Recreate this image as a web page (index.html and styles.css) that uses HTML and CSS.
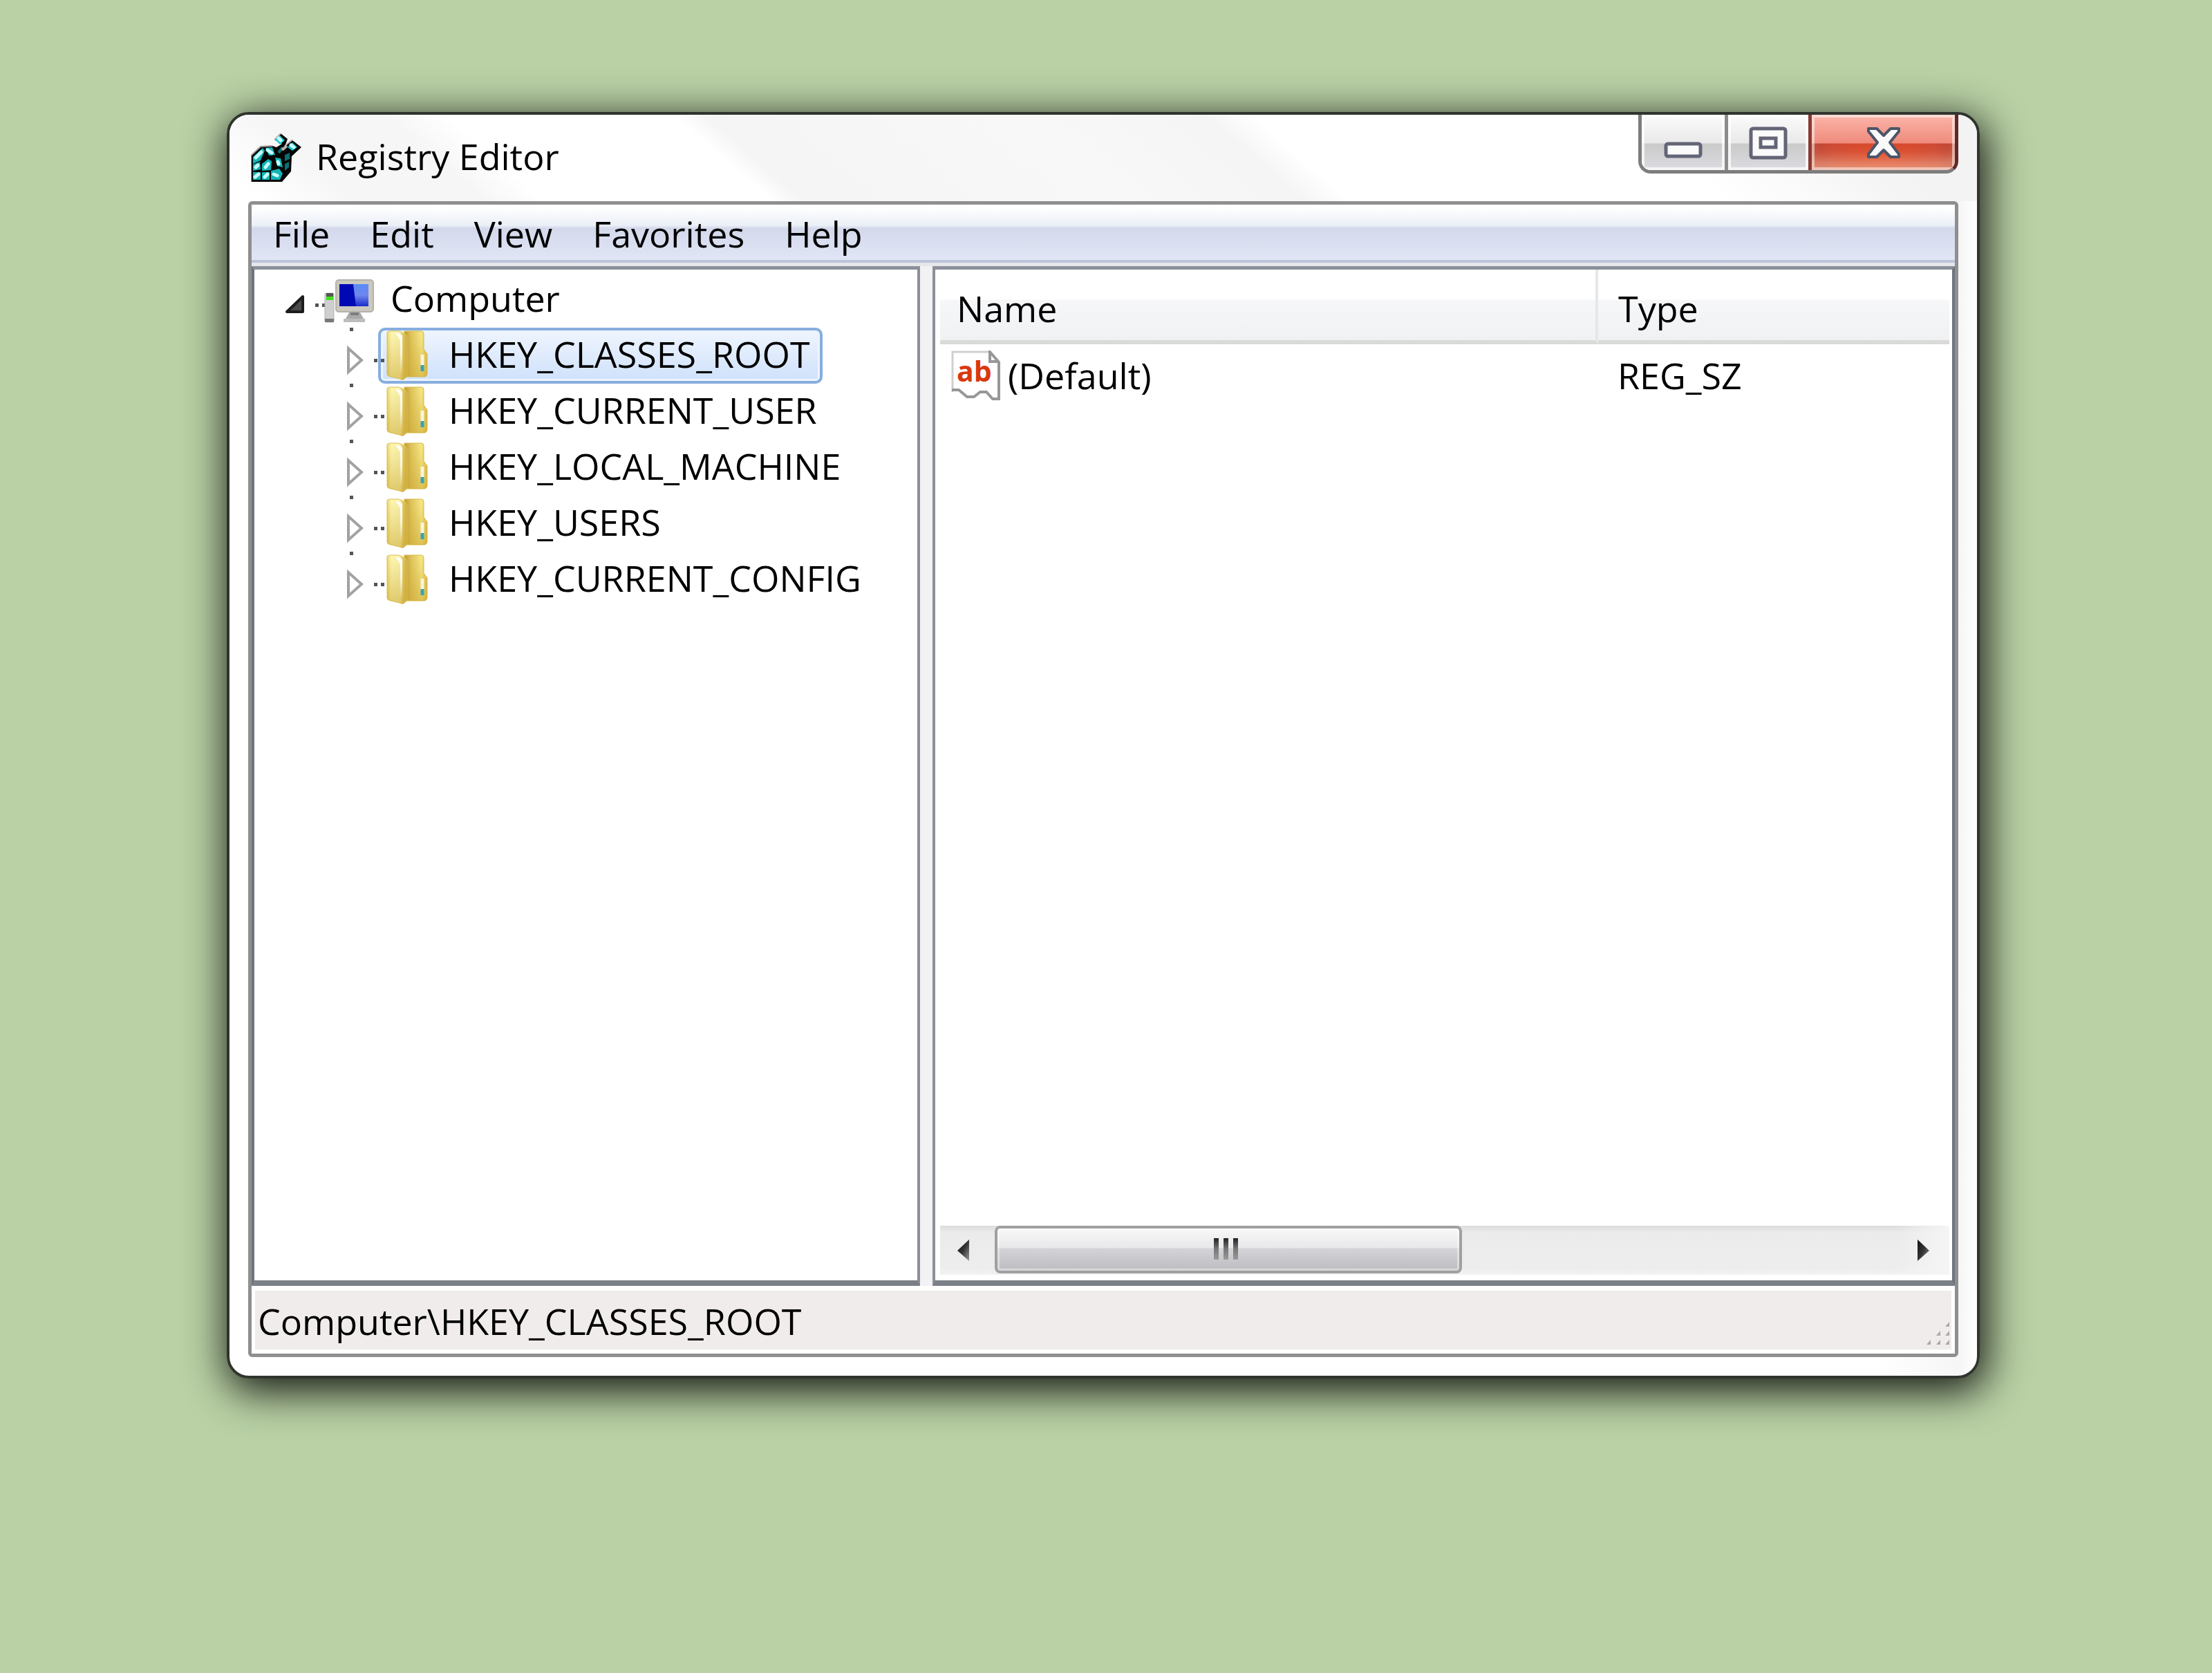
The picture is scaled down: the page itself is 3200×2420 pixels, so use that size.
FILE: index.html
```html
<!DOCTYPE html>
<html lang="en">
<head>
<meta charset="utf-8">
<title>Registry Editor</title>
<link rel="stylesheet" href="styles.css">
</head>
<body>
<svg width="0" height="0" class="defs" aria-hidden="true">
  <defs>
    <linearGradient id="flap" x1="0" x2="1" y1="0" y2="0">
      <stop offset="0" stop-color="#ecd66c"/><stop offset=".2" stop-color="#fdf7b4"/><stop offset=".65" stop-color="#f9f2b0"/><stop offset=".8" stop-color="#e3c95c"/><stop offset="1" stop-color="#cdb04a"/>
    </linearGradient>
    <linearGradient id="shade" x1="0" x2="0" y1="0" y2="1">
      <stop offset="0" stop-color="#c9a530" stop-opacity="0"/><stop offset="1" stop-color="#c9a530" stop-opacity=".55"/>
    </linearGradient>
    <linearGradient id="back" x1="0" x2="1" y1="0" y2="0">
      <stop offset="0" stop-color="#b99a3a"/><stop offset=".3" stop-color="#e0c45a"/><stop offset=".75" stop-color="#f7e98a"/><stop offset="1" stop-color="#e4c64f"/>
    </linearGradient>
    <linearGradient id="glint" x1="0" x2="0" y1="0" y2="1">
      <stop offset="0" stop-color="#fff"/><stop offset=".5" stop-color="#fff" stop-opacity=".8"/><stop offset="1" stop-color="#fff" stop-opacity="0"/>
    </linearGradient>
    <linearGradient id="screen" x1="0" x2="0" y1="0" y2="1">
      <stop offset="0" stop-color="#5b8cf5"/><stop offset=".5" stop-color="#6f86ee"/><stop offset="1" stop-color="#1a2ccc"/>
    </linearGradient>
    <linearGradient id="arrow" x1="0" x2="1" y1="0" y2="1">
      <stop offset="0" stop-color="#111"/><stop offset=".5" stop-color="#333"/><stop offset="1" stop-color="#999"/>
    </linearGradient>
    <symbol id="folder" viewBox="0 0 60 73">
      <path d="M26 1h24q4 0 4 4v22l5 7v28q0 5-5 5H26z" fill="url(#back)" stroke="#d9b948" stroke-width="1"/>
      <path d="M26 1h24q4 0 4 4v22l5 7v28q0 5-5 5H26z" fill="url(#shade)"/>
      <path d="M52 35v16" stroke="#f7f4dc" stroke-width="5"/>
      <path d="M52 50v9" stroke="#3ba3b8" stroke-width="5"/>
      <path d="M1 4q0-3 4-3h14l8 4q3 2 3 5v56l-5 5q-3 1-6-1L3 66q-2-1-2-4z" fill="url(#flap)" stroke="#dcc050" stroke-width="1"/>
      <path d="M1 4q0-3 4-3h14l8 4q3 2 3 5v56l-5 5q-3 1-6-1L3 66q-2-1-2-4z" fill="url(#shade)"/>
      <path d="M13 3l8 3q2 1 2 3v54h-3V14z" fill="url(#glint)"/>
    </symbol>
    <symbol id="branch" viewBox="0 0 68 81">
      <path d="M11 0h5v5h-5zM46 45h5v5h-5zM56 45h5v5h-5z" fill="#555"/>
      <path d="M9 30v34l19-17z" fill="#fff" stroke="#a2a2a2" stroke-width="4"/>
    </symbol>
  </defs>
</svg>

<main class="desktop">
  <section class="window" aria-label="Registry Editor">
    <header class="titlebar">
      <svg class="app-icon" viewBox="8 7 73 74" aria-hidden="true">
        <path d="M8 40L22 27 39 26l6 2 8-5-11-6 9-9 10 8-3 8 10-6 13 10-14 13-1 22-13 15H8z" fill="#050505"/>
        <path d="M8 78V40L22 27l17-1" fill="none" stroke="#a89a9c" stroke-width="2"/>
        <path d="M42 17l9-9M57 26l11-9" stroke="#c4b8ba" stroke-width="2"/>
        <path d="M11 42l14-13 3 4-6 14-11 5zM29 29l10-1 4 11-9 1zM11 53l10-4 1 11-11 2zM24 52l9-7 5 3-1 13-13 1zM43 43l8 1 3 13-8-2zM11 64h11v11H11zM24 64h11v11H24zM37 62l12-3 5 7-4 9H37z" fill="#12b4b6"/>
        <path d="M43 17l7-6 7 7-7 6zM61 28l7-7 7 7-7 5z" fill="#19c9cc"/>
        <path d="M57 39l7-3v9l-7 3zM57 52l6-3v8l-6 5z" fill="#0b6e72"/>
        <path d="M48 36l6-8" stroke="#0b6e72" stroke-width="4"/>
        <path d="M15 43l8-8M32 32l6 4M15 57l3-3M29 57l4-5M14 71l5-4M28 71l4-4M41 67l5 2M47 49l1 3M48 15l3 3M66 25l4 3" stroke="#c4fcfb" stroke-width="5" stroke-linecap="round"/>
        <path d="M53 32l7-6" stroke="#bdb3b5" stroke-width="4"/>
      </svg>
      <h1 class="title">Registry Editor</h1>
      <div class="caption-buttons">
        <button class="caption minimize" type="button" aria-label="Minimize">
          <svg width="56" height="46" viewBox="0 0 56 46"><rect x="3" y="25" width="50" height="18" rx="3" fill="#fafafa" stroke="#636577" stroke-width="5"/></svg>
        </button>
        <button class="caption maximize" type="button" aria-label="Maximize">
          <svg width="56" height="48" viewBox="0 0 56 48"><rect x="3" y="3" width="50" height="42" rx="3" fill="#fafafa" stroke="#636577" stroke-width="5"/><rect x="17" y="17" width="22" height="13" fill="#fafafa" stroke="#636577" stroke-width="5"/></svg>
        </button>
        <button class="caption close" type="button" aria-label="Close">
          <svg width="52" height="48" viewBox="0 0 52 48"><path d="M4 3h12l10 10L36 3h12v4L35 23l13 17v4H36L26 34 16 44H4v-4l13-17L4 7z" fill="#fafafa" stroke="#4d5568" stroke-width="4" stroke-linejoin="round"/></svg>
        </button>
      </div>
    </header>

    <div class="client">
      <nav class="menubar" aria-label="Menu">
        <button type="button">File</button>
        <button type="button">Edit</button>
        <button type="button">View</button>
        <button type="button">Favorites</button>
        <button type="button">Help</button>
      </nav>

      <div class="panes">
        <nav class="tree-pane" aria-label="Keys">
          <ul class="tree">
            <li>
              <div class="row">
                <svg class="root-branch" viewBox="0 0 103 81" aria-hidden="true">
                  <path d="M47 58L70 36v22z" fill="#4a4a4a" stroke="#1c1c1c" stroke-width="4" stroke-linejoin="round"/>
                  <path d="M88 46h5v5h-5zM98 46h5v5h-5z" fill="#555"/>
                </svg>
                <button class="node root" type="button">
                  <svg class="computer" viewBox="10 9 74 64" aria-hidden="true">
                    <rect x="11" y="29" width="13" height="42" rx="2" fill="#cfcfcf" stroke="#b2b2b2"/>
                    <path d="M13 29h10v5H13z" fill="#555"/><path d="M13 34h10v5H13z" fill="#3fe01c"/>
                    <path d="M11 66h13v5H11z" fill="#777"/>
                    <rect x="27" y="10" width="54" height="46" rx="4" fill="#cbc8c0" stroke="#b5b2aa" stroke-width="2"/>
                    <rect x="32" y="16" width="42" height="32" fill="#0008b4"/>
                    <path d="M52 16h22v32H56z" fill="url(#screen)"/>
                    <path d="M46 57h16l5 9H41z" fill="#aaa"/><path d="M38 66h31v5H38z" fill="#bdbdbd"/>
                    <path d="M48 57h12v4H48z" fill="#7d7d7d"/>
                  </svg>
                  <span>Computer</span>
                </button>
              </div>
              <ul class="children">
                <li class="row"><svg class="branch" aria-hidden="true"><use href="#branch"/></svg><button class="node selected" type="button"><svg class="folder" aria-hidden="true"><use href="#folder"/></svg><span>HKEY_CLASSES_ROOT</span></button></li>
                <li class="row"><svg class="branch" aria-hidden="true"><use href="#branch"/></svg><button class="node" type="button"><svg class="folder" aria-hidden="true"><use href="#folder"/></svg><span>HKEY_CURRENT_USER</span></button></li>
                <li class="row"><svg class="branch" aria-hidden="true"><use href="#branch"/></svg><button class="node" type="button"><svg class="folder" aria-hidden="true"><use href="#folder"/></svg><span>HKEY_LOCAL_MACHINE</span></button></li>
                <li class="row"><svg class="branch" aria-hidden="true"><use href="#branch"/></svg><button class="node" type="button"><svg class="folder" aria-hidden="true"><use href="#folder"/></svg><span>HKEY_USERS</span></button></li>
                <li class="row"><svg class="branch" aria-hidden="true"><use href="#branch"/></svg><button class="node" type="button"><svg class="folder" aria-hidden="true"><use href="#folder"/></svg><span>HKEY_CURRENT_CONFIG</span></button></li>
              </ul>
            </li>
          </ul>
        </nav>

        <section class="value-pane" aria-label="Values">
          <table class="values">
            <colgroup><col class="col-name"><col></colgroup>
            <thead><tr><th scope="col">Name</th><th scope="col">Type</th></tr></thead>
            <tbody><tr>
              <td><div class="value-name">
                <svg class="string-icon" viewBox="0 0 72 73" aria-hidden="true">
                  <path d="M2 59V2h54l14 14v59H62L50 64H40l-8 6H24L12 60z" fill="#fff"/>
                  <path d="M2 60V2h53" fill="none" stroke="#cfcfcf" stroke-width="3"/>
                  <path d="M1 57h10l12 10h10l9-7h9l9 10h9V17L56 2v14h12" fill="none" stroke="#979797" stroke-width="4"/>
                  <text x="8" y="45" class="string-glyph">ab</text>
                </svg>
                <span>(Default)</span>
              </div></td>
              <td>REG_SZ</td>
            </tr></tbody>
          </table>
          <div class="scrollbar">
            <button class="scroll-button back" type="button" aria-label="Scroll left"><svg width="22" height="36" viewBox="0 0 22 36"><path d="M19 2v31L2 18z" fill="url(#arrow)"/></svg></button>
            <div class="thumb"><i></i><i></i><i></i></div>
            <button class="scroll-button forward" type="button" aria-label="Scroll right"><svg width="22" height="36" viewBox="0 0 22 36"><path d="M2 2v31l17-15z" fill="url(#arrow)"/></svg></button>
          </div>
        </section>
      </div>

      <footer class="statusbar">
        <span>Computer\HKEY_CLASSES_ROOT</span>
        <svg class="grip" width="36" height="36" viewBox="0 0 36 36" aria-hidden="true">
          <path d="M35 1v7h-6zM35 14v7h-6zM22 14v7h-6zM35 27v7h-6zM22 27v7h-6zM8 27v7H2z" fill="#aaa9ab"/>
        </svg>
      </footer>
    </div>
  </section>
</main>
</body>
</html>
```
FILE: styles.css
```css
* { box-sizing: border-box; }

body {
  margin: 0;
  background: #b9d1a5;
  color: #000;
  font: 400 52px/72px "Open Sans", "Noto Sans", sans-serif;
}

svg { display: block; flex: none; }
.defs { position: absolute; }

button {
  margin: 0;
  padding: 0;
  border: 0;
  background: none;
  color: inherit;
  font: inherit;
}

ul { margin: 0; padding: 0; list-style: none; }

.desktop {
  display: flex;
  min-height: 100vh;
  padding: 162px 336px 426px 328px;
}

/* Window frame */
.window {
  flex: 1;
  display: flex;
  flex-direction: column;
  padding: 0 27px 27px;
  border: 4px solid #30342e;
  border-radius: 32px;
  background: linear-gradient(90deg, #fff 94%, #f6f6f6 99%, #fff);
  box-shadow: 5px 14px 60px 4px rgba(0, 0, 0, .9);
}

.titlebar {
  display: flex;
  align-items: flex-start;
  height: 125px;
  margin: 0 -27px;
  padding: 0 27px;
  border-radius: 28px 28px 0 0;
  background: linear-gradient(41deg, #fff 30px, #f6f6f6 120px, #f6f6f6 240px, #fff 300px, #fff 515px, #f5f5f5 545px, #f8f8f8 850px, #f5f5f5 1020px, #fff 1065px, #fff 1420px, #f3f3f3 1620px);
}

.app-icon { width: 73px; height: 74px; margin: 26px 0 0 4px; }

.title {
  flex: 1;
  margin: 24px 0 0 21px;
  font-size: 52px;
  font-weight: 400;
  line-height: 72px;
}

.caption-buttons {
  display: flex;
  height: 85px;
  border: 5px solid #7d7d7d;
  border-top: 0;
  border-right-color: #5f2a26;
  border-radius: 0 0 18px 18px;
  overflow: hidden;
}

.caption {
  display: flex;
  justify-content: center;
  align-items: flex-start;
  padding-top: 17px;
  border-right: 5px solid #8c8c8c;
  background: linear-gradient(#fbfbfb, #e9e9e9 41px, #cacaca 42px, #d9d9de 74px);
  box-shadow: inset 0 0 0 4px rgba(255, 255, 255, .75);
}
.minimize { width: 125px; }
.maximize { width: 121px; border-right-color: #8a3a32; }
.close {
  width: 207px;
  border-right: 0;
  border-bottom: 5px solid #5a2a26;
  height: 85px;
  background:
    linear-gradient(#fbb5aa, #ef8b7c 41px, transparent 42px),
    radial-gradient(ellipse 60% 90% at 50% 70%, #e04a28, #cf4a33 60%, #b04436),
    #c04432;
  box-shadow: inset 0 0 0 4px rgba(255, 255, 255, .5), inset 0 -24px 20px -8px rgba(245, 190, 160, .6);
}

/* Client area */
.client {
  flex: 1;
  display: flex;
  flex-direction: column;
  border: 5px solid #8f8f8f;
  border-radius: 6px;
  background: #f2f2f4;
}

.menubar {
  display: flex;
  gap: 58px;
  height: 84px;
  padding: 6px 31px 0;
  border-bottom: 4px solid #bcc4da;
  background: linear-gradient(#fff 4px, #ebeff7 30px, #d3d9eb 34px, #e1e6f6);
  box-shadow: 0 5px #e6e7eb;
  align-items: flex-start;
}

.panes {
  flex: 1;
  display: flex;
  gap: 18px;
  margin-top: 5px;
}

.tree-pane,
.value-pane {
  border: 4px solid #8a8f99;
  border-top-width: 5px;
  border-bottom: 8px solid #7b7f87;
  background: #fff;
}

/* Key tree */
.tree-pane { flex: 0 0 967px; padding-top: 3px; border-left-color: #6f747e; }
.row { display: flex; height: 81px; }
.children { padding-left: 127px; }
.root-branch { width: 103px; height: 81px; margin-right: -2px; }
.branch { position: relative; z-index: 1; width: 68px; height: 81px; margin-right: -16px; }

.node {
  display: flex;
  align-items: flex-start;
  gap: 30px;
  padding: 2px 18px 0 12px;
  border-radius: 10px;
  white-space: nowrap;
}
.node.root { gap: 22px; padding-left: 0; }
.node.selected {
  background: linear-gradient(#f1f6fe, #cde0fb);
  box-shadow: inset 0 0 0 4px #87aede, inset 0 0 0 7px #edf4fe;
}
.folder { width: 60px; height: 73px; margin-top: 2px; }
.computer { width: 74px; height: 64px; margin-top: 9px; }

/* Value list */
.value-pane {
  flex: 1;
  display: flex;
  flex-direction: column;
  justify-content: space-between;
  padding: 0 4px 8px 7px;
  border-right-color: #6f747e;
}

.values {
  width: 100%;
  border-collapse: separate;
  border-spacing: 0;
  table-layout: fixed;
  text-align: left;
}
.col-name { width: 952px; }

th {
  padding: 20px 29px 10px;
  border-bottom: 6px solid #dadada;
  background: linear-gradient(#fff 43px, #f6f7f9 44px, #f0f1f3);
  font-weight: 400;
}
th:first-child {
  padding-left: 24px;
  border-right: 4px solid #e6e7e9;
  border-bottom-color: #dadada;
}
td { padding: 9px 28px 0; vertical-align: top; }
td:first-child { padding-left: 16px; }

.value-name { display: flex; gap: 10px; }
.string-icon { width: 72px; height: 73px; }
.string-glyph { fill: #d9380f; font: 700 41px "Open Sans", sans-serif; }

/* Horizontal scrollbar */
.scrollbar {
  display: flex;
  height: 71px;
  background: linear-gradient(#dcdcdc, #ebebeb 10px, #ededed 60px, #f2f2f2);
}
.scroll-button {
  display: flex;
  align-items: center;
  width: 79px;
}
.scroll-button.back { padding-left: 23px; }
.scroll-button.forward { margin-left: auto; padding-left: 31px; background: linear-gradient(90deg, transparent, #f5f5f5); }

.thumb {
  display: flex;
  justify-content: center;
  gap: 7px;
  width: 676px;
  height: 69px;
  padding: 14px 8px 0 0;
  border: 4px solid #a0a0a0;
  border-radius: 8px;
  background: linear-gradient(#f8f8f8, #e8e8ea 28px, #d4d4d8 29px, #bdbdc1);
  box-shadow: inset 0 0 0 3px rgba(255, 255, 255, .4);
}
.thumb i {
  width: 7px;
  height: 31px;
  background: linear-gradient(#222, #777 50%, #999);
}

/* Status bar */
.statusbar {
  display: flex;
  justify-content: space-between;
  align-items: flex-end;
  padding: 8px 2px 5px 4px;
  border: solid #fff;
  border-width: 7px 5px 6px;
  background: #f0eceb;
}
```
